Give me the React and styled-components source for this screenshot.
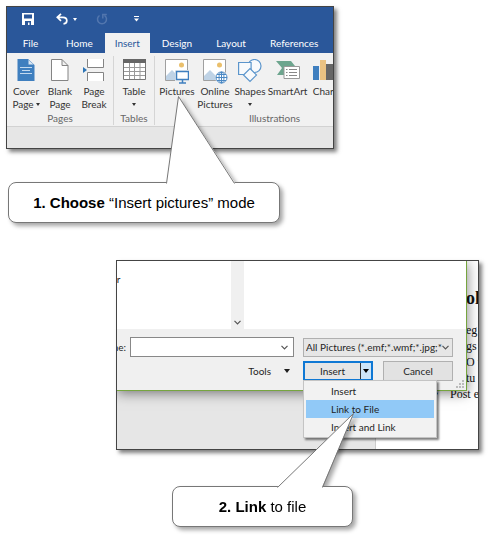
import React from 'react';
import styled, { createGlobalStyle } from 'styled-components';

const GlobalStyle = createGlobalStyle`
  * {
    box-sizing: border-box;
  }
  body {
    margin: 0;
    background: #fff;
    color: #333;
    font-family: Lato, "Open Sans", sans-serif;
    font-size: 10px;
  }
  button, input, select {
    margin: 0;
    padding: 0;
    color: inherit;
    font: inherit;
  }
`;

const App = () => (
  <Page>
    <GlobalStyle />
    <WordPanel>
      <QuickAccess>
        <QuickButton aria-label="Save"><SaveIcon /></QuickButton>
        <QuickPair>
          <QuickButton aria-label="Undo"><UndoIcon /></QuickButton>
          <QuickButton aria-label="Undo history" $narrow><Caret /></QuickButton>
        </QuickPair>
        <QuickButton aria-label="Redo" disabled><RedoIcon /></QuickButton>
        <QuickButton aria-label="Customize toolbar"><CustomizeIcon /></QuickButton>
      </QuickAccess>
      <Tabs>
        {tabs.map((tab) => (
          <Tab key={tab} $active={tab === 'Insert'}>{tab}</Tab>
        ))}
      </Tabs>
      <Ribbon>
        {groups.map((group) => (
          <Group key={group.name} $width={group.width}>
            <Tools>
              {group.tools.map(({ icon: Icon, lines, menu, width }) => (
                <Tool key={lines[0]} $width={width}>
                  <ToolIcon><Icon /></ToolIcon>
                  {lines.map((line, i) => (
                    <ToolLine key={line}>
                      {line}
                      {menu && i > 0 && <Caret />}
                    </ToolLine>
                  ))}
                  {menu && lines.length === 1 && <ToolLine><Caret /></ToolLine>}
                </Tool>
              ))}
            </Tools>
            <GroupName>{group.name}</GroupName>
          </Group>
        ))}
      </Ribbon>
      <Workspace />
    </WordPanel>

    <Callout $left="8px" $top="33px" $width="272px">
      <Tail width="70" height="89" viewBox="0 0 70 89" $left="157px">
        <path d="M0.5 88 L12.5 1.5 L68.5 87 V89 H0.5Z" fill="#fff" />
        <path d="M0.5 88.5 L12.5 1.5 L68.5 88.5" fill="none" stroke="#777" />
      </Tail>
      <b>1. Choose</b> “Insert pictures” mode
    </Callout>

    <DialogPanel>
      <Document>
        <Sheet>
          <h2>ol</h2>
          <p>eg</p>
          <p>gs</p>
          <p>O t</p>
          <p>tu</p>
          <Bullet>Post e</Bullet>
        </Sheet>
      </Document>
      <Dialog>
        <Files>
          <Folders>r</Folders>
          <Scroll><Chevron /></Scroll>
          <Preview />
        </Files>
        <Fields>
          <label htmlFor="name">ne:</label>
          <Combo>
            <input id="name" type="text" />
            <Chevron />
          </Combo>
          <Filter>
            <select aria-label="File type">
              <option>All Pictures (*.emf;*.wmf;*.jpg;*</option>
            </select>
            <Chevron />
          </Filter>
        </Fields>
        <Actions>
          <ToolsButton>
            Tools
            <Caret $big />
          </ToolsButton>
          <Split>
            <InsertButton>Insert</InsertButton>
            <ArrowButton aria-label="Insert options"><Caret $big /></ArrowButton>
            <Menu>
              <MenuItem>Insert</MenuItem>
              <MenuItem $active>Link to File</MenuItem>
              <MenuItem>Insert and Link</MenuItem>
            </Menu>
          </Split>
          <CancelButton>Cancel</CancelButton>
        </Actions>
        <Grip width="8" height="8" viewBox="0 0 8 8">
          <path d="M6 0h2v2H6zM3 3h2v2H3zM6 3h2v2H6zM0 6h2v2H0zM3 6h2v2H3zM6 6h2v2H6z" fill="#bbb" />
        </Grip>
      </Dialog>
    </DialogPanel>

    <Callout $left="172px" $top="36px" $width="181px">
      <Tail width="84" height="76" viewBox="0 0 84 76" $left="104px">
        <path d="M0.5 75 L76.5 1.5 L45.5 74 V76 H0.5Z" fill="#fff" />
        <path d="M0.5 75.5 L76.5 1.5 L45.5 75.5" fill="none" stroke="#777" />
      </Tail>
      <b>2. Link</b> to file
    </Callout>
  </Page>
);

const SaveIcon = () => (
  <svg width="12" height="12" viewBox="0 0 12 12">
    <path d="M0 0h12v12H0z" fill="#fff" />
    <path d="M2 1.500h8v4H2zM3 8h6v4H7.500V9.500H6V12H3z" fill="#2a579a" />
  </svg>
);

const UndoIcon = () => (
  <svg width="12" height="12" viewBox="0 0 12 12" fill="none" stroke="#fff" strokeWidth="1.700">
    <path d="M5 0.800 1.300 4.300 5 7.800M1.500 4.300h5.500c5 0.200 5 6 0.500 6.600" />
  </svg>
);

const RedoIcon = () => (
  <svg width="12" height="12" viewBox="0 0 12 12" fill="none" stroke="#5276ae" strokeWidth="1.500">
    <path d="M3.500 2.500a4.500 4.500 0 1 0 5 0M6.800 5.500V1.500h4" />
  </svg>
);

const CustomizeIcon = () => (
  <svg width="5" height="6" viewBox="0 0 5 6" fill="#fff">
    <path d="M0 0h5v1H0zM0 2.500h5L2.500 5.500z" />
  </svg>
);

const CoverIcon = () => (
  <svg width="18" height="22" viewBox="0 0 18 22">
    <path d="M0.500 0H11l6.500 6v16H0.500z" fill="#3f7fbf" />
    <path d="M11 0.500V6h6" fill="#dce8f4" stroke="#3f7fbf" />
    <path d="M3 8.500h12M5 11.500h8M3 14.500h12" stroke="#c4daef" />
  </svg>
);

const BlankIcon = () => (
  <svg width="18" height="22" viewBox="0 0 18 22" fill="#fff" stroke="#848484">
    <path d="M0.500 0.500H11l6 6v15H0.500zM11 0.500v6h6" />
  </svg>
);

const BreakIcon = () => (
  <svg width="22" height="22" viewBox="0 0 22 22">
    <path d="M4.500 0v8.500h16V0M4.500 22v-8.500h16V22" fill="#fff" stroke="#848484" />
    <path d="M0 8l4 3-4 3z" fill="#2e75b6" />
  </svg>
);

const TableIcon = () => (
  <svg width="23" height="22" viewBox="0 0 23 22">
    <path d="M0.500 0.500h22v20h-22z" fill="#fff" stroke="#777" />
    <path d="M0 0h23v4H0z" fill="#666" />
    <path d="M1 8.500h21M1 12.500h21M1 16.500h21M6.500 4v16M11.500 4v16M17 4v16" stroke="#9a9a9a" />
  </svg>
);

const Photo = () => (
  <>
    <path d="M0.500 0.500h22v21h-22z" fill="#fff" stroke="#a0a0a0" />
    <path d="M1 21v-4l6-6 8 8v2z" fill="#bfd3e6" />
    <circle cx="16.500" cy="6" r="2.500" fill="#eabf6b" />
  </>
);

const PicturesIcon = () => (
  <svg width="24" height="25" viewBox="0 0 24 25">
    <Photo />
    <path d="M10 11h14v14H10z" fill="#f1f1f1" />
    <path d="M11.500 12.500h12v8h-12z" fill="#fff" stroke="#3f7fbf" strokeWidth="1.500" />
    <path d="M17.500 21v2.500M14 24h7" stroke="#3f7fbf" strokeWidth="1.500" />
  </svg>
);

const OnlineIcon = () => (
  <svg width="25" height="25" viewBox="0 0 25 25">
    <Photo />
    <circle cx="18.500" cy="18.500" r="6.500" fill="#f1f1f1" />
    <g fill="#fff" stroke="#4a88c4">
      <circle cx="18.500" cy="18.500" r="5.500" />
      <ellipse cx="18.500" cy="18.500" rx="2.500" ry="5.500" fill="none" />
      <path d="M13 18.500h11M14 15.500h9M14 21.500h9M18.500 13v11" />
    </g>
  </svg>
);

const ShapesIcon = () => (
  <svg width="24" height="24" viewBox="0 0 24 24" fill="#f8fafc" stroke="#5b95cc" strokeWidth="1.200">
    <circle cx="16.500" cy="7" r="6.500" />
    <path d="M0.600 3.500h12.500v12H0.600z" />
    <path d="M12 9.500 18.500 16 12 22.500 5.500 16z" />
  </svg>
);

const SmartArtIcon = () => (
  <svg width="24" height="22" viewBox="0 0 24 22">
    <path d="M0 2h15l4 5-4 6 -4 3H1l5-7z" fill="#6da58e" />
    <path d="M8 7.500h15.500v12H8z" fill="#fff" stroke="#999" />
    <path d="M10 10.500h1.500M13 10.500h8M10 13.500h1.500M13 13.500h8M10 16.500h1.500M13 16.500h8" stroke="#888" />
  </svg>
);

const ChartIcon = () => (
  <svg width="24" height="22" viewBox="0 0 24 22">
    <path d="M0 7h6v14H0z" fill="#3f7fbf" />
    <path d="M7 1h6v20H7z" fill="#eac282" />
    <path d="M13 5h7v16h-7z" fill="#666" />
  </svg>
);

const Chevron = () => (
  <svg width="7" height="5" viewBox="0 0 7 5" fill="none" stroke="#555" strokeWidth="1.200">
    <path d="M0.500 0.800 3.500 3.800 6.500 0.800" />
  </svg>
);

const tabs = ['File', 'Home', 'Insert', 'Design', 'Layout', 'References'];

const groups = [
  {
    name: 'Pages',
    width: 107,
    tools: [
      { icon: CoverIcon, lines: ['Cover', 'Page'], menu: true, width: 34 },
      { icon: BlankIcon, lines: ['Blank', 'Page'], width: 34 },
      { icon: BreakIcon, lines: ['Page', 'Break'], width: 34 },
    ],
  },
  {
    name: 'Tables',
    width: 41,
    tools: [{ icon: TableIcon, lines: ['Table'], menu: true, width: 36 }],
  },
  {
    name: 'Illustrations',
    width: 240,
    tools: [
      { icon: PicturesIcon, lines: ['Pictures'], width: 40 },
      { icon: OnlineIcon, lines: ['Online', 'Pictures'], width: 36 },
      { icon: ShapesIcon, lines: ['Shapes'], menu: true, width: 34 },
      { icon: SmartArtIcon, lines: ['SmartArt'], width: 41 },
      { icon: ChartIcon, lines: ['Chart'], width: 34 },
    ],
  },
];

const Page = styled.main`
  padding: 6px 0 10px;
`;

const WordPanel = styled.section`
  margin: 0 32% 0 6px;
  overflow: hidden;
  border: 1px solid #444;
  box-shadow: 3px 3px 4px rgba(0, 0, 0, 0.5);
`;

const QuickAccess = styled.div`
  display: flex;
  align-items: center;
  height: 26px;
  padding: 0 11px 2px;
  gap: 14px;
  color: #fff;
  background: #2a579a;
`;

const QuickPair = styled.div`
  display: flex;
`;

const QuickButton = styled.button`
  display: flex;
  align-items: center;
  justify-content: center;
  width: ${(props) => (props.$narrow ? 6 : 20)}px;
  height: 20px;
  border: 0;
  background: none;
`;

const Tabs = styled.nav`
  display: flex;
  height: 20px;
  background: #2a579a;
`;

const Tab = styled.button`
  padding: 0 ${(props) => (props.$active ? 10 : 12)}px;
  border: 0;
  line-height: 20px;
  color: ${(props) => (props.$active ? '#2a579a' : '#fff')};
  background: ${(props) => (props.$active ? '#f1f1f1' : 'none')};
  &:first-child {
    min-width: 47px;
  }
`;

const Ribbon = styled.div`
  display: flex;
  height: 74px;
  padding-top: 3px;
  border-bottom: 1px solid #d2d2d2;
  background: #f1f1f1;
`;

const Group = styled.div`
  display: flex;
  flex: none;
  flex-direction: column;
  width: ${(props) => props.$width}px;
  height: 69px;
  border-right: 1px solid #d5d5d5;
`;

const Tools = styled.div`
  display: flex;
  flex: 1;
  padding-left: 2px;
`;

const Tool = styled.button`
  display: flex;
  flex: none;
  flex-direction: column;
  align-items: center;
  width: ${(props) => props.$width}px;
  padding-top: 3px;
  border: 0;
  background: none;
`;

const ToolIcon = styled.span`
  display: flex;
  align-items: flex-start;
  height: 26px;
`;

const ToolLine = styled.span`
  display: flex;
  align-items: center;
  gap: 2px;
  height: 13px;
  line-height: 13px;
  white-space: nowrap;
`;

const GroupName = styled.div`
  line-height: 13px;
  text-align: center;
  color: #666;
`;

const Caret = styled.i`
  border: solid transparent;
  border-width: ${(props) => (props.$big ? '4px 3px 0' : '3px 2px 0')};
  border-top-color: currentColor;
`;

const Workspace = styled.div`
  height: 21px;
  background: #e6e6e6;
`;

const Callout = styled.p`
  position: relative;
  z-index: 1;
  width: ${(props) => props.$width};
  margin: ${(props) => `${props.$top} 0 0 ${props.$left}`};
  padding: 9px 0;
  border: 1px solid #777;
  border-radius: 8px;
  background: #fff;
  color: #000;
  font: 15px/21px "Liberation Sans", Arial, sans-serif;
  text-align: center;
  filter: drop-shadow(3px 3px 2px rgba(0, 0, 0, 0.35));
`;

const Tail = styled.svg`
  position: absolute;
  bottom: 100%;
  left: ${(props) => props.$left};
  margin-bottom: -1px;
`;

const DialogPanel = styled.section`
  display: grid;
  grid-template-columns: minmax(0, 1fr);
  width: 74%;
  margin: 37px 12px 0 auto;
  overflow: hidden;
  border: 1px solid #444;
  box-shadow: 3px 3px 4px rgba(0, 0, 0, 0.5);
`;

const Document = styled.div`
  display: flex;
  grid-area: 1 / 1;
  justify-content: flex-end;
  background: #e6e6e6;
`;

const Sheet = styled.div`
  width: 103px;
  padding: 27px 0 0 90px;
  overflow: hidden;
  border-left: 1px solid #ccc;
  background: #fff;
  color: #111;
  font: 12px/16px "Liberation Serif", serif;
  white-space: nowrap;
  h2 {
    margin: 0 0 14px;
    font-size: 18px;
    line-height: 20px;
  }
  p {
    margin: 0;
  }
`;

const Bullet = styled.p`
  && {
    margin-left: -16px;
  }
  &::before {
    content: "•";
    float: left;
    margin-left: -16px;
  }
`;

const Dialog = styled.div`
  position: relative;
  grid-area: 1 / 1;
  margin: 0 11px 58px 0;
  border: solid #76a53f;
  border-width: 0 1px 1px 0;
  background: #f0f0f0;
  color: #1f1f1f;
  box-shadow: 0 2px 12px rgba(0, 0, 0, 0.5);
`;

const Files = styled.div`
  display: flex;
  height: 68px;
  background: #fff;
`;

const Folders = styled.div`
  flex: 1;
  padding-top: 12px;
`;

const Scroll = styled.div`
  display: flex;
  align-items: flex-end;
  justify-content: center;
  width: 13px;
  padding-bottom: 4px;
  background: #f0f0f0;
`;

const Preview = styled.div`
  width: 222px;
`;

const Fields = styled.div`
  display: flex;
  align-items: center;
  padding: 8px 13px 0 0;
  label {
    display: flex;
    flex: 1;
    justify-content: flex-end;
    min-width: 0;
  }
`;

const Combo = styled.div`
  display: flex;
  flex: none;
  align-items: center;
  width: 164px;
  height: 20px;
  margin: 0 9px 0 4px;
  padding-right: 5px;
  border: 1px solid #888;
  background: #fff;
  input {
    flex: 1;
    min-width: 0;
    border: 0;
    outline: 0;
    background: none;
  }
`;

const Filter = styled.div`
  display: flex;
  flex: none;
  align-items: center;
  width: 150px;
  height: 19px;
  padding: 0 3px 0 2px;
  border: 1px solid #b0b0b0;
  background: #e6e6e6;
  select {
    flex: 1;
    min-width: 0;
    appearance: none;
    border: 0;
    outline: 0;
    background: none;
  }
`;

const Actions = styled.div`
  display: flex;
  justify-content: flex-end;
  padding: 4px 13px 9px 0;
`;

const ToolsButton = styled.button`
  display: flex;
  align-items: center;
  gap: 13px;
  margin-right: 13px;
  border: 0;
  background: none;
`;

const Split = styled.div`
  position: relative;
  display: flex;
  width: 70px;
  height: 20px;
  margin-right: 10px;
  border: 2px solid #0f78d4;
  background: #e6e6e6;
`;

const InsertButton = styled.button`
  flex: 1;
  border: 0;
  background: none;
`;

const ArrowButton = styled.button`
  display: flex;
  align-items: center;
  justify-content: center;
  width: 11px;
  border: 0;
  border-left: 1px solid #333;
  background: #cce4f7;
  color: #000;
`;

const CancelButton = styled.button`
  width: 70px;
  height: 20px;
  border: 1px solid #b0b0b0;
  background: #e2e2e2;
`;

const Menu = styled.div`
  position: absolute;
  top: 17px;
  left: -2px;
  z-index: 1;
  width: 134px;
  padding: 1px 2px;
  border: 1px solid #c4c4c4;
  background: #f2f2f2;
  box-shadow: 2px 2px 2px rgba(0, 0, 0, 0.5);
`;

const MenuItem = styled.button`
  display: block;
  width: 100%;
  padding-left: 25px;
  border: 0;
  line-height: 18px;
  text-align: left;
  background: ${(props) => (props.$active ? '#91c9f7' : 'none')};
`;

const Grip = styled.svg`
  position: absolute;
  right: 2px;
  bottom: 2px;
`;

export default App;
